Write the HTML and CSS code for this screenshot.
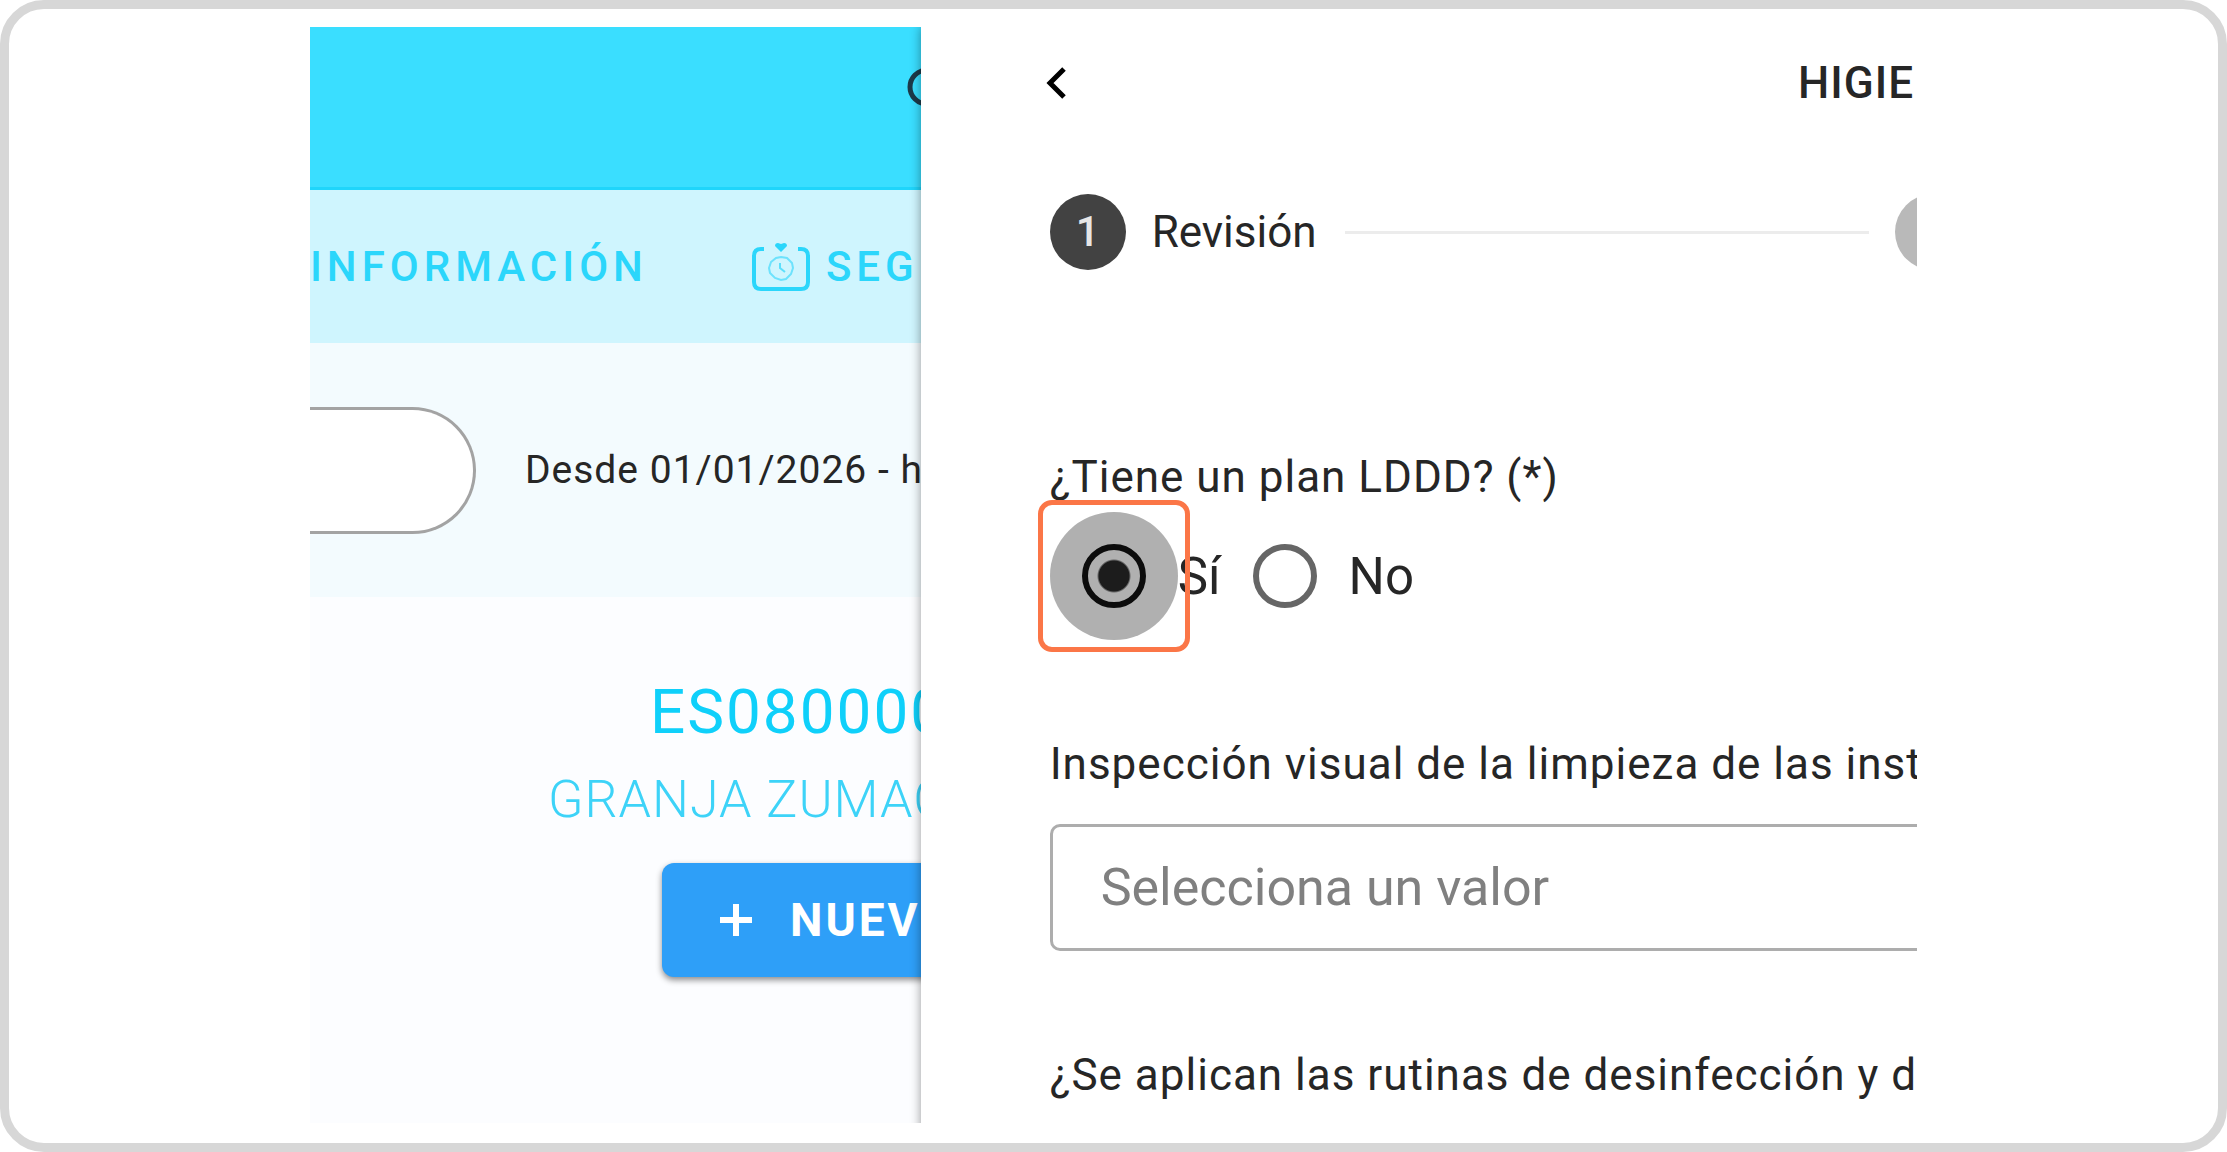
FILE: index.html
```html
<!DOCTYPE html>
<html lang="es">
<head>
    <meta charset="UTF-8">
    <meta name="viewport" content="width=device-width, initial-scale=1.0">
    <title>Revisión</title>
    <link rel="stylesheet" href="styles.css">
</head>
<body>
    <div class="frame">
        <div class="stage">
            <main class="farm">
                <header class="topbar">
                    <svg class="search-icon" viewBox="0 0 48 48" width="48" height="48" fill="none" stroke="#1c3a4a" stroke-width="5">
                        <circle cx="20" cy="21" r="17"/>
                        <path d="M32 33l14 14"/>
                    </svg>
                </header>
                <nav class="tabs">
                    <a class="tab" href="#">INFORMACIÓN</a>
                    <a class="tab" href="#">
                        <svg class="tab-icon" viewBox="0 0 58 48" width="58" height="48" fill="none" stroke="#2bd6fb">
                            <path d="M12 6H9Q2 6 2 13V39Q2 46 9 46H49Q56 46 56 39V13Q56 6 49 6H46" stroke-width="4"/>
                            <path d="M29 9L23 3Q23 0 26 0L29 1L32 0Q35 0 35 3Z" fill="#2bd6fb" stroke="none"/>
                            <path d="M29 14L35 15L40 20L41 25L39 31L34 36L29 37L23 35L18 30L17 25L19 19L24 15Z" stroke-width="2" opacity=".6"/>
                            <path d="M28 20V25L33 29" stroke-width="2" opacity=".7"/>
                        </svg>
                        SEG
                    </a>
                </nav>
                <div class="filter">
                    <input class="search" type="text" aria-label="Buscar">
                    <span class="range">Desde 01/01/2026 - h</span>
                </div>
                <section class="summary">
                    <h1 class="farm-code">ES080000</h1>
                    <h2 class="farm-name">GRANJA ZUMAC</h2>
                    <button class="new-btn" type="button">
                        <svg viewBox="0 0 32 32" width="32" height="32" stroke="#fff" stroke-width="6"><path d="M16 0V32M0 16H32"/></svg>
                        NUEV
                    </button>
                </section>
            </main>

            <aside class="drawer">
                <header class="drawer-head">
                    <button class="back" type="button" aria-label="Volver">
                        <svg viewBox="0 0 20 32" width="20" height="32" fill="none" stroke="#000" stroke-width="5"><path d="M18 2L4 16L18 30"/></svg>
                    </button>
                    <h2 class="drawer-title">HIGIE</h2>
                </header>

                <div class="stepper">
                    <span class="step active">1</span>
                    <span class="step-label">Revisión</span>
                    <span class="step-line"></span>
                    <span class="step next"></span>
                </div>

                <form class="form">
                    <fieldset class="field">
                        <legend class="question">¿Tiene un plan LDDD? (*)</legend>
                        <div class="radios">
                            <span class="radio focused">
                                <input type="radio" name="plan" id="plan-si" checked>
                            </span>
                            <label for="plan-si">Sí</label>
                            <span class="radio">
                                <input type="radio" name="plan" id="plan-no">
                            </span>
                            <label for="plan-no">No</label>
                        </div>
                    </fieldset>
                    <div class="field">
                        <label class="question" for="limpieza">Inspección visual de la limpieza de las inst</label>
                        <select class="select" id="limpieza">
                            <option>Selecciona un valor</option>
                        </select>
                    </div>
                    <div class="field">
                        <p class="question">¿Se aplican las rutinas de desinfección y d</p>
                    </div>
                </form>
            </aside>
        </div>
    </div>
</body>
</html>
```
FILE: styles.css
```css
* {
    box-sizing: border-box;
}
body {
    margin: 0;
    background: #fff;
    font-family: Roboto, "Liberation Sans", sans-serif;
    color: #262626;
}
h1, h2, p {
    margin: 0;
    font-weight: 400;
}
.frame {
    display: flex;
    justify-content: center;
    height: 100vh;
    padding: 18px 0 20px;
    border: 9px solid #d7d7d7;
    border-radius: 44px;
}
.stage {
    display: grid;
    grid-template-columns: 38fr 62fr;
    width: 72.75%;
    overflow: hidden;
}

/* farm page, left side */
.farm {
    min-width: 0;
    overflow: hidden;
    background: #fcfdff;
    white-space: nowrap;
}
.topbar {
    display: flex;
    justify-content: flex-end;
    height: 163px;
    padding-top: 39px;
    background: #3adeff;
    border-bottom: 3px solid #1fd5fb;
}
.search-icon {
    flex: none;
    margin-right: -34px;
}
.tabs {
    display: flex;
    align-items: center;
    gap: 104px;
    height: 153px;
    background: #cff5fe;
}
.tab {
    display: flex;
    align-items: center;
    gap: 16px;
    font-size: 42px;
    font-weight: 500;
    letter-spacing: 5px;
    color: #2bd6fb;
    text-decoration: none;
}
.tab-icon {
    flex: none;
}
.filter {
    display: flex;
    align-items: center;
    gap: 49px;
    height: 254px;
    background: #f3fbfe;
}
.search {
    width: 166px;
    height: 127px;
    flex: none;
    border: 3px solid #a3a3a3;
    border-left: 0;
    border-radius: 0 64px 64px 0;
    background: #fff;
}
.range {
    font-size: 39px;
    letter-spacing: 1px;
}
.summary {
    padding-top: 75px;
    line-height: 80px;
}
.farm-code {
    padding-left: 340px;
    font-size: 62px;
    letter-spacing: 2px;
    color: #0fd0fa;
}
.farm-name {
    margin: 8px 0 23px;
    padding-left: 238px;
    font-size: 52px;
    font-weight: 300;
    letter-spacing: 1px;
    color: #3dd3f8;
}
.new-btn {
    display: flex;
    align-items: center;
    gap: 38px;
    width: 400px;
    height: 114px;
    margin-left: 352px;
    padding: 0 58px;
    border: 0;
    border-radius: 12px;
    background: #2e9ff8;
    box-shadow: 0 3px 6px rgba(0, 0, 0, 0.45);
    font-family: inherit;
    font-size: 46px;
    font-weight: 700;
    letter-spacing: 3px;
    color: #fff;
}
.new-btn svg {
    flex: none;
}

/* drawer */
.drawer {
    position: relative;
    min-width: 0;
    padding-left: 129px;
    background: #fff;
    box-shadow: 0 0 10px rgba(0, 0, 0, 0.4);
    white-space: nowrap;
}
.drawer-head {
    display: flex;
    justify-content: space-between;
    align-items: center;
    height: 112px;
    padding-right: 3px;
}
.back {
    display: flex;
    margin-left: -4px;
    padding: 0;
    border: 0;
    background: none;
}
.drawer-title {
    font-size: 44px;
    font-weight: 500;
    letter-spacing: 1px;
}
.stepper {
    display: flex;
    align-items: center;
    margin: 55px 0 177px;
}
.step {
    flex: none;
    width: 76px;
    height: 76px;
    border-radius: 50%;
    line-height: 76px;
    text-align: center;
    font-size: 42px;
    font-weight: 500;
    color: #e6e6e6;
}
.step.active {
    background: #424242;
}
.step.next {
    margin-right: -54px;
    background: #b9b9b9;
}
.step-label {
    margin-left: 26px;
    font-size: 44px;
    line-height: 76px;
}
.step-line {
    flex: 1;
    height: 3px;
    margin: 0 26px 0 28px;
    background: #ececec;
}
.field {
    margin: 0 0 94px;
    padding: 0;
    border: 0;
}
.question {
    display: block;
    padding: 0;
    font-size: 44px;
    letter-spacing: 1px;
    line-height: 60px;
}
.radios {
    display: flex;
    align-items: center;
    margin-top: 5px;
    font-size: 51px;
}
.radio {
    position: relative;
    display: flex;
    justify-content: center;
    align-items: center;
    width: 128px;
    height: 128px;
    border-radius: 50%;
}
.radio input {
    appearance: none;
    width: 64px;
    height: 64px;
    margin: 0;
    border: 6px solid #666;
    border-radius: 50%;
}
.radio input:checked {
    border-color: #0c0c0c;
    background: radial-gradient(circle, #1c1c1c 15px, transparent 17px);
}
.radio.focused {
    background: #b0b0b0;
}
.radio.focused::after {
    content: "";
    position: absolute;
    inset: -12px;
    border: 5px solid #fb7647;
    border-radius: 14px;
}
.select {
    appearance: none;
    display: block;
    width: 120%;
    height: 127px;
    margin-top: 30px;
    padding: 0 48px;
    border: 3px solid #adadad;
    border-radius: 10px;
    background: #fff;
    font-family: inherit;
    font-size: 52px;
    color: #808080;
}
```
